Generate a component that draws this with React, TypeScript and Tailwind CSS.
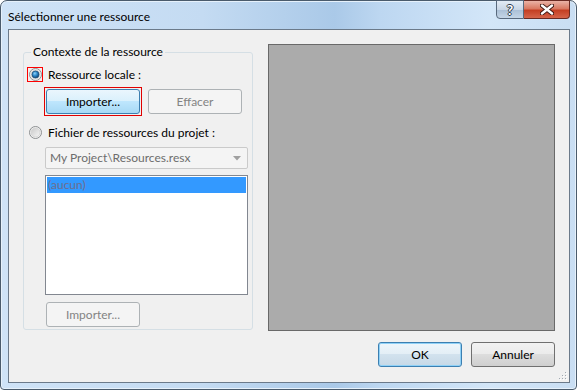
const font = { fontFamily: 'Lato, "Open Sans", sans-serif' };

const Radio = ({ checked }: { checked?: boolean }) => (
  <svg width="13" height="13" viewBox="0 0 13 13">
    <defs>
      <linearGradient id={checked ? "rg1" : "rg0"} x1="0" y1="0" x2="1" y2="1">
        <stop offset="0" stopColor="#c9c9c9" />
        <stop offset="1" stopColor="#f6f6f6" />
      </linearGradient>
      <radialGradient id="dot" cx="0.4" cy="0.35" r="0.7">
        <stop offset="0" stopColor="#8fd0f5" />
        <stop offset="0.45" stopColor="#2f8ccf" />
        <stop offset="1" stopColor="#0d3a64" />
      </radialGradient>
    </defs>
    <circle cx="6.5" cy="6.5" r="6" fill="#f4f4f4" stroke="#8c8f91" />
    <circle cx="6.5" cy="6.5" r="4.5" fill={`url(#${checked ? "rg1" : "rg0"})`} stroke="#d6d6d6" />
    {checked && <circle cx="6.5" cy="6.5" r="3.5" fill="url(#dot)" stroke="#1c4f7c" strokeWidth="0.8" />}
  </svg>
);

const Btn = ({ label, kind, w = "w-[94px]" }: { label: string; kind: "normal" | "hover" | "default" | "disabled"; w?: string }) => {
  const styles = {
    normal:
      "border-[#707070] text-black bg-[linear-gradient(180deg,#f2f2f2_0%,#ebebeb_49%,#dddddd_50%,#cfcfcf_100%)]",
    hover:
      "border-[#3c7fb1] text-black bg-[linear-gradient(180deg,#eaf6fd_0%,#d9f0fc_49%,#bee6fd_50%,#a7d9f5_100%)]",
    default:
      "border-[#3c7fb1] text-black bg-[linear-gradient(180deg,#eef6fb_0%,#e3eef6_49%,#d2e2ee_50%,#c6d8e6_100%)] shadow-[inset_0_0_0_1px_#8fd1f7]",
    disabled: "border-[#adb2b5] text-[#838383] bg-[#f4f4f4]",
  }[kind];
  return (
    <div className={`${w} h-[25px] rounded-[3px] border flex items-center justify-center text-[12px] leading-none ${styles}`}>
      {label}
    </div>
  );
};

export default function App() {
  return (
    <div className="w-[577px] h-[390px] bg-white" style={font}>
      <div className="h-full flex flex-col rounded-t-[7px] rounded-b-[4px] border border-[#4a5b6c] bg-[linear-gradient(90deg,#cfe3f7_0%,#c4dbf2_35%,#aac9e8_58%,#bdd7f1_66%,#d3e6f8_85%,#c9def3_100%)] shadow-[inset_0_0_0_1px_#e6f1fb]">
        {/* title bar */}
        <div className="h-[28px] flex items-start pl-[7px] pr-[6px]">
          <div className="pt-[8px] text-[12px] leading-[16px] text-black">Sélectionner une ressource</div>
          <div className="ml-auto flex -mt-[1px]">
            <div className="w-[28px] h-[19px] rounded-bl-[4px] border border-[#58697d] bg-[linear-gradient(180deg,#e2ebf5_0%,#c8d6e6_50%,#aabfd6_52%,#c4d5e6_100%)] flex items-center justify-center">
              <span
                className="text-[14px] font-bold leading-none text-white"
                style={{ textShadow: "1px 0 0 #2b3a4a, -1px 0 0 #2b3a4a, 0 1px 0 #2b3a4a, 0 -1px 0 #2b3a4a" }}
              >
                ?
              </span>
            </div>
            <div className="w-[46px] h-[19px] rounded-br-[4px] border border-l-0 border-[#6a2a22] bg-[linear-gradient(180deg,#eab3a6_0%,#d97962_45%,#c43f23_55%,#d5644a_100%)] flex items-center justify-center">
              <svg width="14" height="11" viewBox="0 0 14 11">
                <path d="M2 1.5 L12 9.5 M12 1.5 L2 9.5" stroke="#3a1510" strokeWidth="4.2" strokeLinecap="round" />
                <path d="M2 1.5 L12 9.5 M12 1.5 L2 9.5" stroke="#ffffff" strokeWidth="2.4" strokeLinecap="round" />
              </svg>
            </div>
          </div>
        </div>

        {/* client area */}
        <div className="mx-[7px] mb-[6px] mr-[6px] h-[354px] border border-[#6b7a8a] bg-[#f0f0f0] flex flex-col text-[12px] leading-[16px] text-black">
          <div className="flex items-start pt-[14px] pl-[14px]">
            {/* group box */}
            <div className="mt-[8px] w-[230px] h-[278px] rounded-[3px] border border-[#d5dfe5] flex flex-col">
              <span className="-mt-[9px] ml-[7px] px-[2px] w-fit bg-[#f0f0f0]">Contexte de la ressource</span>

              <div className="mt-[7px] ml-[3px] flex items-center h-[15px]">
                <div className="w-[16px] h-[15px] border border-[#ff0000] flex items-center justify-center">
                  <Radio checked />
                </div>
                <span className="ml-[5px]">Ressource locale :</span>
              </div>

              <div className="mt-[5px] ml-[20px] flex items-center">
                <div className="border border-[#e00000] p-[1px]">
                  <Btn label="Importer..." kind="hover" />
                </div>
                <div className="ml-[6px]">
                  <Btn label="Effacer" kind="disabled" />
                </div>
              </div>

              <div className="mt-[9px] ml-[3px] flex items-center h-[15px]">
                <div className="w-[16px] h-[15px] flex items-center justify-center">
                  <Radio />
                </div>
                <span className="ml-[5px]">Fichier de ressources du projet :</span>
              </div>

              <div className="mt-[7px] ml-[21px] w-[203px] h-[22px] rounded-[2px] border border-[#cacaca] bg-[#f4f4f4] flex items-center pl-[4px] pr-[6px] text-[#6d6d6d]">
                <span>My Project\Resources.resx</span>
                <svg className="ml-auto" width="8" height="5" viewBox="0 0 8 5">
                  <path d="M0 0 L8 0 L4 4.5 Z" fill="#a0a0a0" />
                </svg>
              </div>

              <div className="mt-[6px] ml-[21px] w-[203px] h-[120px] border border-[#828790] bg-white p-[1px]">
                <div className="h-[16px] bg-[#3399ff] pl-[1px] text-[#6e6e8e] leading-[16px]">(aucun)</div>
              </div>

              <div className="mt-[7px] ml-[22px]">
                <Btn label="Importer..." kind="disabled" />
              </div>
            </div>

            {/* preview */}
            <div className="ml-[15px] w-[287px] h-[287px] border border-[#696969] bg-[#ababab]" />
          </div>

          <div className="mt-[11px] flex justify-end pr-[14px] gap-[9px]">
            <Btn label="OK" kind="default" w="w-[84px]" />
            <Btn label="Annuler" kind="normal" w="w-[84px]" />
          </div>

          <div className="mt-auto flex justify-end pr-[2px] pb-[2px]">
            <svg width="8" height="8" viewBox="0 0 8 8">
              {[
                [6, 0],
                [6, 3],
                [3, 3],
                [6, 6],
                [3, 6],
                [0, 6],
              ].map(([x, y], i) => (
                <g key={i}>
                  <rect x={x + 1} y={y + 1} width="1" height="1" fill="#ffffff" />
                  <rect x={x} y={y} width="1" height="1" fill="#a0a8b0" />
                </g>
              ))}
            </svg>
          </div>
        </div>
      </div>
    </div>
  );
}
